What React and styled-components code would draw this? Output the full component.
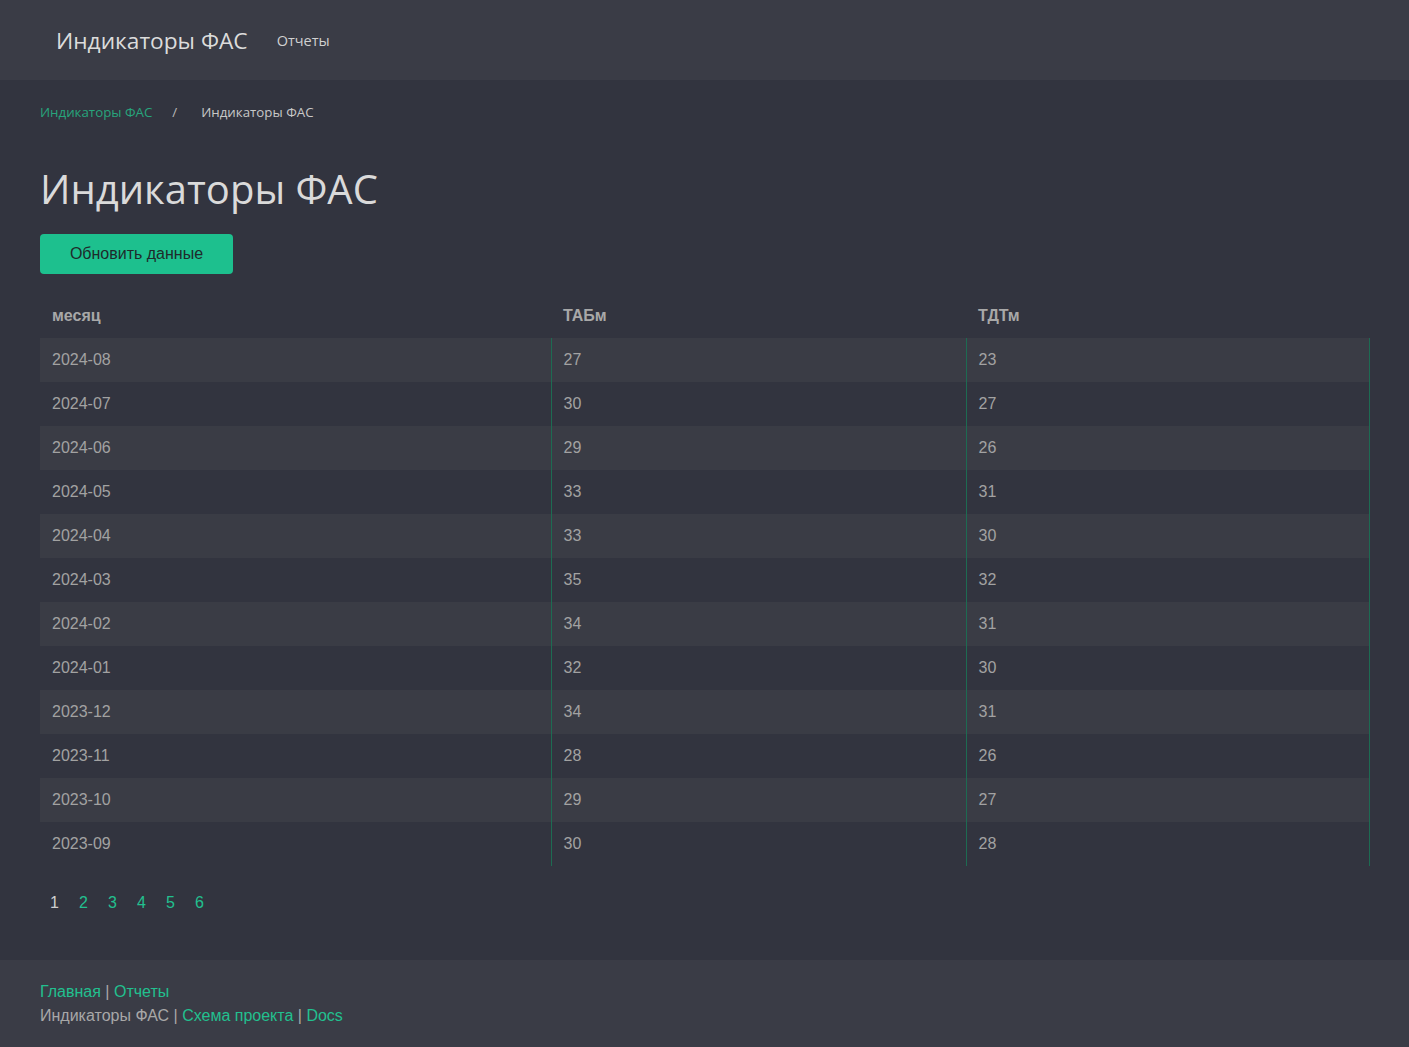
import React from 'react';
import styled, { createGlobalStyle } from 'styled-components';

const GlobalStyle = createGlobalStyle`
    html, body {
        margin: 0;
        padding: 0;
        background: #32343f;
    }
    body {
        font-family: "Liberation Sans", Arial, sans-serif;
        color: #b4b4b4;
    }
`;

const rows = [
    ['2024-08', 27, 23],
    ['2024-07', 30, 27],
    ['2024-06', 29, 26],
    ['2024-05', 33, 31],
    ['2024-04', 33, 30],
    ['2024-03', 35, 32],
    ['2024-02', 34, 31],
    ['2024-01', 32, 30],
    ['2023-12', 34, 31],
    ['2023-11', 28, 26],
    ['2023-10', 29, 27],
    ['2023-09', 30, 28],
];

const Page = styled.div`
    min-height: 1047px;
    display: flex;
    flex-direction: column;
`;

const Navbar = styled.nav`
    height: 80px;
    background: #3a3c46;
    display: flex;
    align-items: center;
    padding: 0 56px;
    gap: 29px;
    box-sizing: border-box;
`;

const Brand = styled.a`
    font-family: "Open Sans", "Noto Sans", sans-serif;
    font-size: 22.7px;
    color: #dcdcdc;
    text-decoration: none;
`;

const NavLink = styled.a`
    font-family: "Open Sans", "Noto Sans", sans-serif;
    font-size: 14.5px;
    color: #d0d0d0;
    text-decoration: none;
`;

const Main = styled.main`
    flex: 1;
    padding: 22px 40px 40px;
`;

const Breadcrumb = styled.div`
    display: flex;
    align-items: center;
    font-family: "Open Sans", "Noto Sans", sans-serif;
    font-size: 13.3px;
    height: 20px;
`;

const Crumb = styled.a`
    color: ${p => (p.$active ? '#c8c8c8' : '#27a57c')};
    text-decoration: none;
`;

const Sep = styled.span`
    color: #b8b8b8;
    padding: 0 24px 0 20px;
`;

const Title = styled.h1`
    font-family: "Open Sans", "Noto Sans", sans-serif;
    font-weight: 400;
    font-size: 40px;
    color: #dadada;
    margin: 39px 0 0;
    line-height: 56px;
`;

const Button = styled.button`
    display: block;
    margin-top: 17px;
    width: 193px;
    height: 40px;
    border: none;
    border-radius: 4px;
    background: #1dc08e;
    color: #1f2b2b;
    font-family: "Liberation Sans", Arial, sans-serif;
    font-size: 16px;
    cursor: pointer;
`;

const Table = styled.table`
    margin-top: 20px;
    width: 1329px;
    border-collapse: collapse;
    table-layout: fixed;
`;

const Th = styled.th`
    text-align: left;
    font-weight: 700;
    font-size: 16px;
    color: #a8a8a8;
    height: 44px;
    padding: 0 12px;
    vertical-align: middle;
`;

const Tr = styled.tr`
    background: ${p => (p.$odd ? '#3a3c45' : '#32343f')};
`;

const Td = styled.td`
    height: 44px;
    padding: 0 12px;
    font-size: 16px;
    color: #a2a2a2;
    border-left: ${p => (p.$first ? 'none' : '1px solid #1d6b52')};
    border-right: ${p => (p.$last ? '1px solid #1d6b52' : 'none')};
`;

const Pager = styled.div`
    display: flex;
    margin-top: 28px;
    padding-left: 10px;
    font-size: 16px;
`;

const PageLink = styled.a`
    width: 29px;
    color: ${p => (p.$current ? '#cfcfcf' : '#22c08f')};
    text-decoration: none;
`;

const Footer = styled.footer`
    background: #3a3c46;
    height: 87px;
    padding: 20px 40px 0;
    box-sizing: border-box;
    font-size: 16px;
    line-height: 24px;
    color: #a8a8a8;
`;

const FooterLink = styled.a`
    color: #22c08f;
    text-decoration: none;
`;

export default function App() {
    return (
        <Page>
            <GlobalStyle />
            <Navbar>
                <Brand href="#">Индикаторы ФАС</Brand>
                <NavLink href="#">Отчеты</NavLink>
            </Navbar>
            <Main>
                <Breadcrumb>
                    <Crumb href="#">Индикаторы ФАС</Crumb>
                    <Sep>/</Sep>
                    <Crumb $active>Индикаторы ФАС</Crumb>
                </Breadcrumb>
                <Title>Индикаторы ФАС</Title>
                <Button>Обновить данные</Button>
                <Table>
                    <colgroup>
                        <col style={{ width: 511 }} />
                        <col style={{ width: 415 }} />
                        <col style={{ width: 403 }} />
                    </colgroup>
                    <thead>
                        <tr>
                            <Th>месяц</Th>
                            <Th>ТАБм</Th>
                            <Th>ТДТм</Th>
                        </tr>
                    </thead>
                    <tbody>
                        {rows.map((r, i) => (
                            <Tr key={r[0]} $odd={i % 2 === 0}>
                                <Td $first>{r[0]}</Td>
                                <Td>{r[1]}</Td>
                                <Td $last>{r[2]}</Td>
                            </Tr>
                        ))}
                    </tbody>
                </Table>
                <Pager>
                    {[1, 2, 3, 4, 5, 6].map(n => (
                        <PageLink key={n} href="#" $current={n === 1}>{n}</PageLink>
                    ))}
                </Pager>
            </Main>
            <Footer>
                <div>
                    <FooterLink href="#">Главная</FooterLink> | <FooterLink href="#">Отчеты</FooterLink>
                </div>
                <div>
                    Индикаторы ФАС | <FooterLink href="#">Схема проекта</FooterLink> | <FooterLink href="#">Docs</FooterLink>
                </div>
            </Footer>
        </Page>
    );
}
